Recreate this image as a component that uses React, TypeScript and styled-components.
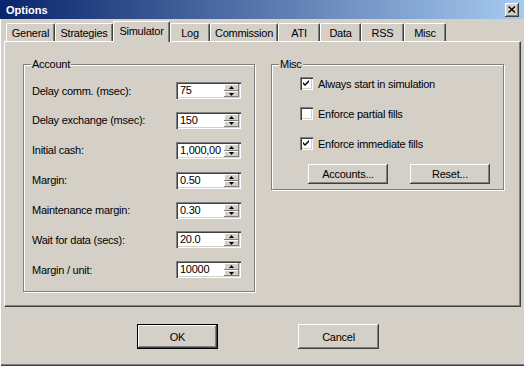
import styled, { createGlobalStyle } from 'styled-components';

const GlobalStyle = createGlobalStyle`
  html, body {
    margin: 0;
    padding: 0;
    background: #d4d0c8;
  }
  body {
    font-family: "Liberation Sans", Arial, sans-serif;
    font-size: 11px;
    letter-spacing: -0.25px;
    color: #000;
  }
  * { box-sizing: border-box; }
`;

const raised = `
  box-shadow: inset -1px -1px #404040, inset 1px 1px #ffffff,
    inset -2px -2px #808080, inset 2px 2px #d4d0c8;
`;

const sunken = `
  box-shadow: inset 1px 1px #808080, inset 2px 2px #404040,
    inset -1px -1px #ffffff, inset -2px -2px #d4d0c8;
`;

const Window = styled.div`
  width: 524px;
  height: 366px;
  display: flex;
  flex-direction: column;
  background: #d4d0c8;
  box-shadow: inset 1px 0 #ffffff, inset 0 -1px #404040, inset 0 -2px #808080;
`;

const TitleBar = styled.div`
  height: 19px;
  flex: none;
  display: flex;
  align-items: center;
  justify-content: space-between;
  padding: 0 5px 0 6px;
  background: linear-gradient(to right, #0a246a, #a6caf0);
`;

const Title = styled.span`
  color: #fff;
  font-weight: bold;
  letter-spacing: 0;
`;

const CloseButton = styled.div`
  width: 14px;
  height: 14px;
  display: flex;
  align-items: center;
  justify-content: center;
  background: #d4d0c8;
  ${raised}
`;

const Body = styled.div`
  flex: 1;
  display: flex;
  flex-direction: column;
  padding-left: 4px;
`;

const TabStrip = styled.div`
  height: 22px;
  display: flex;
  align-items: flex-end;
  padding-left: 2px;
`;

const Tab = styled.div<{ $w: number; $active?: boolean }>`
  position: relative;
  z-index: ${(p) => (p.$active ? 1 : 0)};
  width: ${(p) => p.$w}px;
  height: ${(p) => (p.$active ? 21 : 18)}px;
  margin-bottom: ${(p) => (p.$active ? -1 : 0)}px;
  display: flex;
  align-items: center;
  justify-content: center;
  padding-bottom: ${(p) => (p.$active ? 2 : 0)}px;
  background: #d4d0c8;
  border-top: 1px solid #fff;
  border-left: 1px solid #fff;
  border-right: 1px solid #404040;
  border-radius: 2px 2px 0 0;
  box-shadow: inset -1px 0 #808080;
`;

const Panel = styled.div`
  width: 517px;
  height: 266px;
  display: flex;
  align-items: flex-start;
  gap: 16px;
  padding: 22px 0 0 18px;
  border-top: 1px solid #fff;
  border-left: 1px solid #fff;
  border-right: 1px solid #404040;
  border-bottom: 1px solid #404040;
  box-shadow: inset -1px -1px #808080;
`;

const Group = styled.div<{ $w: number; $h: number }>`
  position: relative;
  width: ${(p) => p.$w}px;
  height: ${(p) => p.$h}px;
  border: 1px solid #808080;
  box-shadow: inset 1px 1px #fff, 1px 1px 0 #fff;
`;

const GroupLabel = styled.span`
  position: absolute;
  top: -7px;
  left: 7px;
  padding: 0 1px;
  line-height: 13px;
  background: #d4d0c8;
`;

const FieldList = styled.div`
  display: flex;
  flex-direction: column;
  gap: 12.9px;
  padding: 17px 13px 0 8px;
`;

const FieldRow = styled.div`
  height: 17px;
  display: flex;
  align-items: center;
  justify-content: space-between;
`;

const SpinBox = styled.div`
  width: 65px;
  height: 17px;
  display: flex;
  padding: 2px;
  background: #fff;
  ${sunken}
`;

const SpinValue = styled.div`
  flex: 1;
  overflow: hidden;
  white-space: nowrap;
  padding-left: 2px;
  line-height: 13px;
`;

const SpinButtons = styled.div`
  width: 15px;
  display: flex;
  flex-direction: column;
`;

const SpinButton = styled.div<{ $h: number }>`
  height: ${(p) => p.$h}px;
  display: flex;
  align-items: center;
  justify-content: center;
  background: #d4d0c8;
  box-shadow: inset -1px -1px #808080, inset 1px 1px #fff;
`;

const CheckList = styled.div`
  display: flex;
  flex-direction: column;
  gap: 17px;
  padding: 12px 0 0 28px;
`;

const CheckRow = styled.label`
  display: flex;
  align-items: center;
  gap: 5px;
  height: 13px;
`;

const CheckBox = styled.span`
  width: 13px;
  height: 13px;
  display: flex;
  align-items: center;
  justify-content: center;
  background: #fff;
  ${sunken}
`;

const ButtonRow = styled.div<{ $gap: number; $left: number; $top: number }>`
  display: flex;
  gap: ${(p) => p.$gap}px;
  padding: ${(p) => p.$top}px 0 0 ${(p) => p.$left}px;
`;

const PushButton = styled.div<{ $w: number; $h: number; $default?: boolean }>`
  width: ${(p) => p.$w}px;
  height: ${(p) => p.$h}px;
  display: flex;
  align-items: center;
  justify-content: center;
  background: #d4d0c8;
  border: ${(p) => (p.$default ? '1px solid #000' : 'none')};
  ${raised}
`;

const tabs: [string, number][] = [
  ['General', 49],
  ['Strategies', 58],
  ['Simulator', 57],
  ['Log', 40],
  ['Commission', 68],
  ['ATI', 42],
  ['Data', 41],
  ['RSS', 43],
  ['Misc', 42],
];

const fields: [string, string][] = [
  ['Delay comm. (msec):', '75'],
  ['Delay exchange (msec):', '150'],
  ['Initial cash:', '1,000,00'],
  ['Margin:', '0.50'],
  ['Maintenance margin:', '0.30'],
  ['Wait for data (secs):', '20.0'],
  ['Margin / unit:', '10000'],
];

const checks: [string, boolean][] = [
  ['Always start in simulation', true],
  ['Enforce partial fills', false],
  ['Enforce immediate fills', true],
];

function Arrow({ up }: { up?: boolean }) {
  return (
    <svg width="5" height="3" viewBox="0 0 5 3">
      <path d={up ? 'M2.5 0 L5 3 L0 3 Z' : 'M0 0 L5 0 L2.5 3 Z'} fill="#000" />
    </svg>
  );
}

function Spinner({ value }: { value: string }) {
  return (
    <SpinBox>
      <SpinValue>{value}</SpinValue>
      <SpinButtons>
        <SpinButton $h={7}>
          <Arrow up />
        </SpinButton>
        <SpinButton $h={6}>
          <Arrow />
        </SpinButton>
      </SpinButtons>
    </SpinBox>
  );
}

function Check({ label, checked }: { label: string; checked: boolean }) {
  return (
    <CheckRow>
      <CheckBox>
        {checked && (
          <svg width="7" height="7" viewBox="0 0 7 7">
            <path d="M0 2 L2 4 L6 0 L6 2 L2 6 L0 4 Z" fill="#000" />
          </svg>
        )}
      </CheckBox>
      {label}
    </CheckRow>
  );
}

export default function App() {
  return (
    <>
      <GlobalStyle />
      <Window>
        <TitleBar>
          <Title>Options</Title>
          <CloseButton>
            <svg width="8" height="7" viewBox="0 0 8 7">
              <path d="M0.5 0.5 L7 6.5 M7 0.5 L0.5 6.5" stroke="#000" strokeWidth="1.4" />
            </svg>
          </CloseButton>
        </TitleBar>
        <Body>
          <TabStrip>
            {tabs.map(([name, w]) => (
              <Tab key={name} $w={w} $active={name === 'Simulator'}>
                {name}
              </Tab>
            ))}
          </TabStrip>
          <Panel>
            <Group $w={232} $h={228}>
              <GroupLabel>Account</GroupLabel>
              <FieldList>
                {fields.map(([label, value]) => (
                  <FieldRow key={label}>
                    <span>{label}</span>
                    <Spinner value={value} />
                  </FieldRow>
                ))}
              </FieldList>
            </Group>
            <Group $w={233} $h={126}>
              <GroupLabel>Misc</GroupLabel>
              <CheckList>
                {checks.map(([label, on]) => (
                  <Check key={label} label={label} checked={on} />
                ))}
              </CheckList>
              <ButtonRow $gap={22} $left={36} $top={14}>
                <PushButton $w={80} $h={20}>Accounts...</PushButton>
                <PushButton $w={80} $h={20}>Reset...</PushButton>
              </ButtonRow>
            </Group>
          </Panel>
          <ButtonRow $gap={80} $left={133} $top={17}>
            <PushButton $w={81} $h={25} $default>OK</PushButton>
            <PushButton $w={81} $h={25}>Cancel</PushButton>
          </ButtonRow>
        </Body>
      </Window>
    </>
  );
}
